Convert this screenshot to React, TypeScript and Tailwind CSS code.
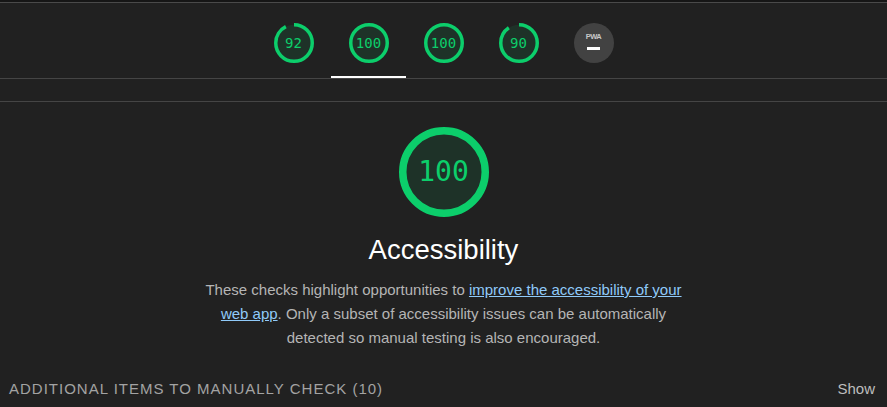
import React from "react";

const GREEN = "#0cce6b";

const scores = [
  { label: "92", value: 92 },
  { label: "100", value: 100, active: true },
  { label: "100", value: 100 },
  { label: "90", value: 90 },
];

function Gauge({ value, label, size, stroke, fontSize }: { value: number; label: string; size: number; stroke: number; fontSize: string }) {
  const r = (size - stroke) / 2;
  const c = 2 * Math.PI * r;
  return (
    <div className="relative flex items-center justify-center" style={{ width: size, height: size }}>
      <svg width={size} height={size} className="absolute inset-0 -rotate-90">
        <circle cx={size / 2} cy={size / 2} r={r} fill={GREEN} fillOpacity={0.1} stroke="none" />
        <circle
          cx={size / 2}
          cy={size / 2}
          r={r}
          fill="none"
          stroke={GREEN}
          strokeWidth={stroke}
          strokeDasharray={`${(value / 100) * c} ${c}`}
        />
      </svg>
      <span className={`relative font-['DejaVu_Sans_Mono',monospace] text-[#0cce6b] ${fontSize}`}>{label}</span>
    </div>
  );
}

function PwaBadge() {
  return (
    <div className="flex h-10 w-10 flex-col items-center justify-center rounded-full bg-[#424242]">
      <span className="mt-[-3px] font-['Liberation_Sans',sans-serif] text-[7.5px] font-bold leading-none tracking-[-0.5px] text-[#c8c8c8]">PWA</span>
      <span className="mt-[6px] h-[3px] w-[13px] bg-white" />
    </div>
  );
}

export default function App() {
  return (
    <div className="h-[407px] w-full overflow-hidden bg-[#212121] font-['Liberation_Sans',Arial,sans-serif]">
      <div className="h-[2px] bg-[#161616]" />
      <div className="h-px bg-[#4a4a4a]" />

      <div className="flex justify-center border-b border-[#454545]">
        {scores.map((s, i) => (
          <div
            key={i}
            className={`flex h-[75px] w-[75px] justify-center pt-5 ${s.active ? "-mb-px border-b-2 border-white" : ""}`}
          >
            <Gauge value={s.value} label={s.label} size={40} stroke={3.5} fontSize="text-[14px]" />
          </div>
        ))}
        <div className="flex h-[75px] w-[75px] justify-center pt-5">
          <PwaBadge />
        </div>
      </div>

      <div className="mt-[22px] border-t border-[#454545]" />

      <div className="flex flex-col items-center pt-[25px]">
        <Gauge value={100} label="100" size={90} stroke={7.5} fontSize="text-[28px]" />
        <h2 className="mt-[17px] text-[27.5px] leading-8 text-white">Accessibility</h2>
        <p className="mt-3 w-[490px] text-center text-[15px] leading-6 text-[#b5b5b5]">
          These checks highlight opportunities to{" "}
          <a className="text-[#90caf9] underline">improve the accessibility of your web app</a>. Only a subset of
          accessibility issues can be automatically detected so manual testing is also encouraged.
        </p>
      </div>

      <div className="mt-[29px] flex items-center justify-between pl-[9px] pr-3">
        <span className="text-[15px] leading-5 uppercase tracking-[1px] text-[#a3a3a3]">Additional items to manually check (10)</span>
        <span className="text-[15px] leading-5 text-[#bdbdbd]">Show</span>
      </div>
    </div>
  );
}
